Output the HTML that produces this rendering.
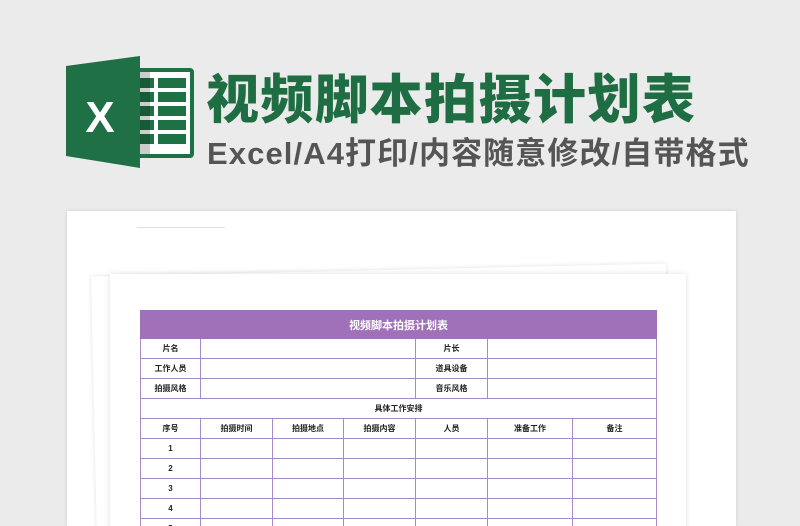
<!DOCTYPE html>
<html><head><meta charset="utf-8"><style>
*{margin:0;padding:0;box-sizing:border-box}
html,body{width:800px;height:526px;overflow:hidden}
body{background:#ebebeb;position:relative;font-family:"Liberation Sans","Noto Sans CJK SC",sans-serif}
.t1{position:absolute;left:206px;top:66px;font-size:53px;font-weight:900;color:#1f6e43;letter-spacing:1.5px;white-space:nowrap;line-height:70px}
.t2{position:absolute;left:207px;top:134px;font-size:31px;font-weight:bold;color:#555;white-space:nowrap;line-height:40px;letter-spacing:1.1px}
.card{position:absolute;left:67px;top:211px;width:669px;height:315px;background:#fff;box-shadow:0 0 4px rgba(0,0,0,.12)}
.back{position:absolute;left:94px;top:270px;width:575px;height:270px;background:#fff;transform:rotate(-1.3deg);box-shadow:0 0 5px rgba(0,0,0,.12)}
.front{position:absolute;left:110px;top:274px;width:576px;height:260px;background:#fff;box-shadow:0 0 6px rgba(0,0,0,.12)}
table{position:absolute;left:140px;top:310px;border-collapse:collapse;width:516px;table-layout:fixed}
td{border:1.3px solid #a78bc8;height:20px;font-size:8px;font-weight:bold;text-align:center;color:#222}
.h td{background:#a070b8;color:#fff;height:28px;font-size:11px;border-color:#a070b8}
</style></head><body>
<svg style="position:absolute;left:64px;top:56px" width="132" height="112" viewBox="0 0 132 112">
<rect x="60" y="12" width="70" height="90" rx="4" fill="#1e7145"/>
<rect x="64" y="16" width="62" height="82" fill="#fff"/>
<g fill="#1e7145">
<rect x="72" y="22" width="18" height="10"/><rect x="94" y="22" width="28" height="10"/>
<rect x="72" y="36" width="18" height="10"/><rect x="94" y="36" width="28" height="10"/>
<rect x="72" y="50" width="18" height="10"/><rect x="94" y="50" width="28" height="10"/>
<rect x="72" y="64" width="18" height="10"/><rect x="94" y="64" width="28" height="10"/>
<rect x="72" y="78" width="18" height="10"/><rect x="94" y="78" width="28" height="10"/>
</g>
<rect x="76" y="16" width="10" height="82" fill="#000" opacity=".2"/>
<polygon points="2,10 76,0 76,112 2,100" fill="#1f7145"/>
<text x="36" y="76" font-size="44" font-weight="bold" fill="#fff" text-anchor="middle" font-family="Liberation Sans">X</text>
</svg>
<div class="t1">视频脚本拍摄计划表</div>
<div class="t2">Excel/A4打印/内容随意修改/自带格式</div>
<div class="card"><div style="position:absolute;left:70px;top:16px;width:88px;height:1px;background:#d6e2ef"></div></div>
<div class="back"></div>
<div class="front"></div>
<table>
<colgroup><col style="width:60px"><col style="width:72px"><col style="width:71px"><col style="width:72px"><col style="width:72px"><col style="width:85px"><col style="width:84px"></colgroup>
<tr class="h"><td colspan="7">视频脚本拍摄计划表</td></tr>
<tr><td>片名</td><td colspan="3"></td><td>片长</td><td colspan="2"></td></tr>
<tr><td>工作人员</td><td colspan="3"></td><td>道具设备</td><td colspan="2"></td></tr>
<tr><td>拍摄风格</td><td colspan="3"></td><td>音乐风格</td><td colspan="2"></td></tr>
<tr><td colspan="7">具体工作安排</td></tr>
<tr><td>序号</td><td>拍摄时间</td><td>拍摄地点</td><td>拍摄内容</td><td>人员</td><td>准备工作</td><td>备注</td></tr>
<tr><td>1</td><td></td><td></td><td></td><td></td><td></td><td></td></tr>
<tr><td>2</td><td></td><td></td><td></td><td></td><td></td><td></td></tr>
<tr><td>3</td><td></td><td></td><td></td><td></td><td></td><td></td></tr>
<tr><td>4</td><td></td><td></td><td></td><td></td><td></td><td></td></tr>
<tr><td>5</td><td></td><td></td><td></td><td></td><td></td><td></td></tr>
</table>
</body></html>
